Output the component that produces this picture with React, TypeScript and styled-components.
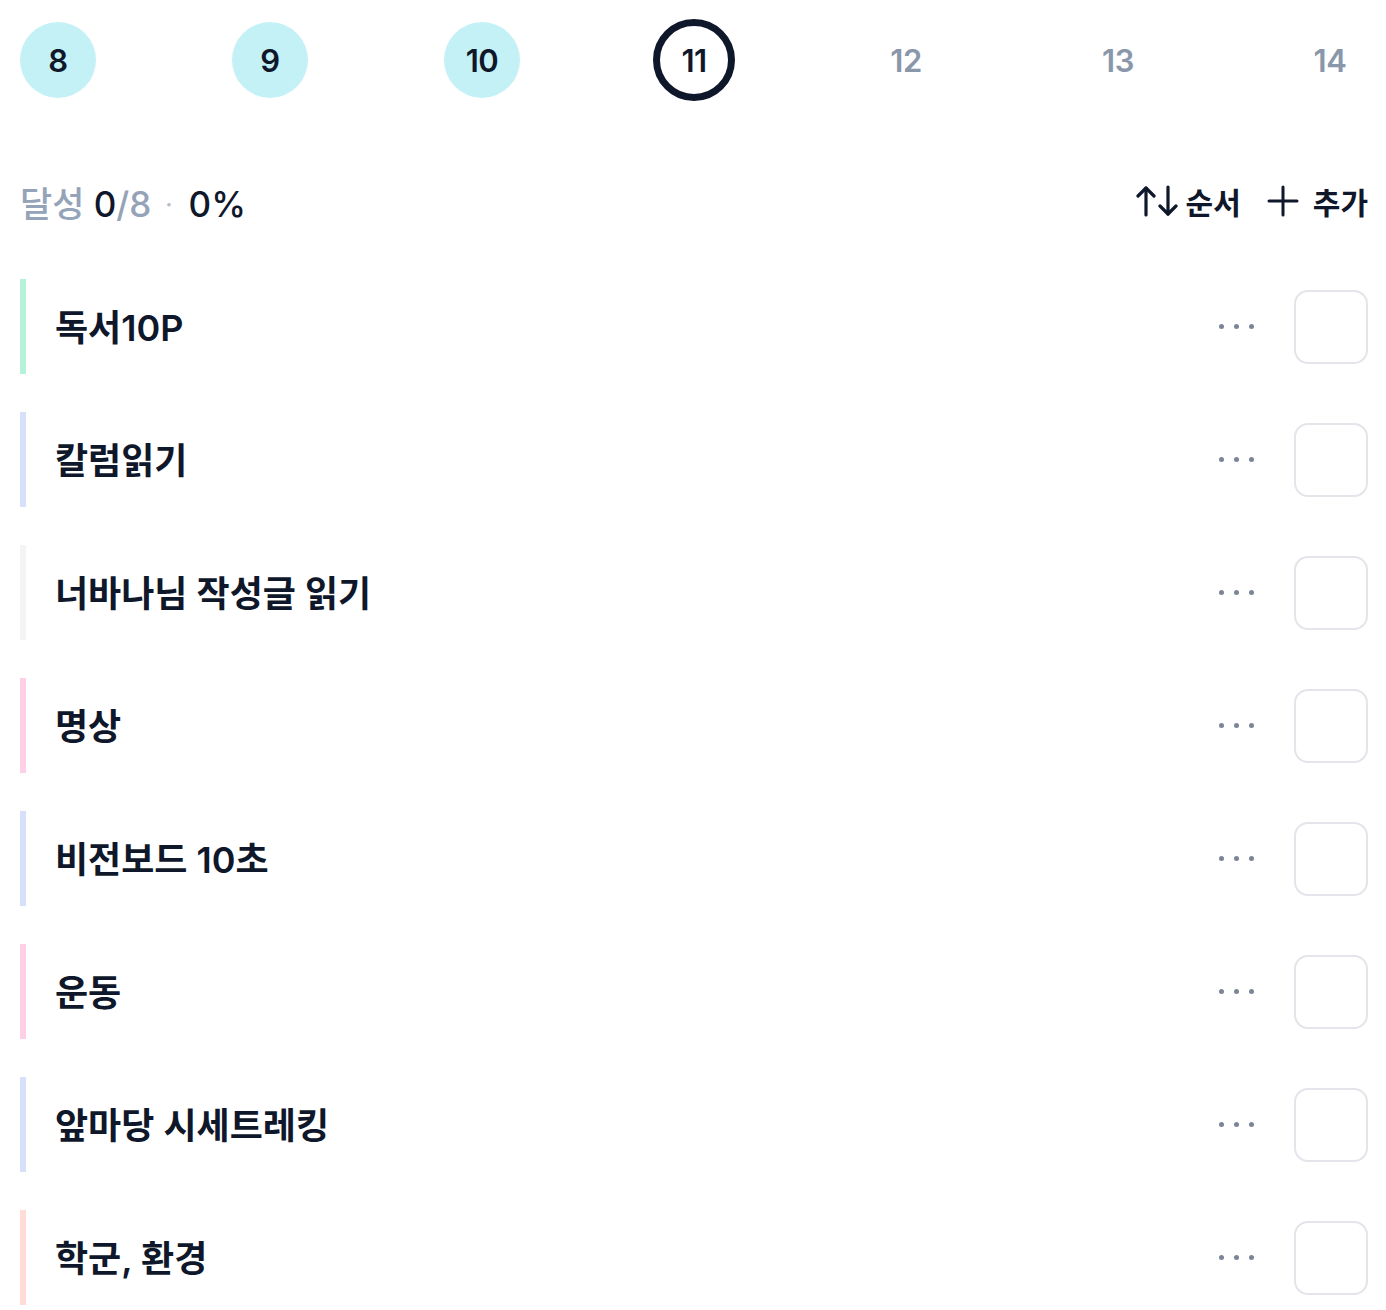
import styled, { createGlobalStyle } from "styled-components";

const GlobalStyle = createGlobalStyle`
  * { box-sizing: border-box; }
  body {
    margin: 0;
    background: #ffffff;
    font-family: Inter, "Noto Sans CJK KR", sans-serif;
    color: #0f172a;
  }
`;

const days = [
  { n: 8, state: "done" },
  { n: 9, state: "done" },
  { n: 10, state: "done" },
  { n: 11, state: "today" },
  { n: 12, state: "future" },
  { n: 13, state: "future" },
  { n: 14, state: "future" },
];

const habits = [
  { title: "독서10P", color: "#b6f1da" },
  { title: "칼럼읽기", color: "#d6e0fb" },
  { title: "너바나님 작성글 읽기", color: "#f3f4f6" },
  { title: "명상", color: "#fdd0e8" },
  { title: "비전보드 10초", color: "#d6e0fb" },
  { title: "운동", color: "#fdd0e8" },
  { title: "앞마당 시세트레킹", color: "#d6e0fb" },
  { title: "학군, 환경", color: "#ffdcd8" },
];

function SortIcon() {
  return (
    <svg width="42" height="32" viewBox="0 0 42 32" fill="none" stroke="#0f172a" strokeWidth="3.2" strokeLinecap="round" strokeLinejoin="round">
      <path d="M10 30V3" />
      <path d="M2 11l8-8 8 8" />
      <path d="M32 2v27" />
      <path d="M24 21l8 8 8-8" />
    </svg>
  );
}

function PlusIcon() {
  return (
    <svg width="32" height="32" viewBox="0 0 32 32" fill="none" stroke="#0f172a" strokeWidth="3" strokeLinecap="round">
      <path d="M16 2v28" />
      <path d="M2 16h28" />
    </svg>
  );
}

function App() {
  return (
    <>
      <GlobalStyle />
      <Page>
        <DayStrip>
          {days.map((d) => (
            <Day key={d.n} $state={d.state}>{d.n}</Day>
          ))}
        </DayStrip>

        <SummaryBar>
          <Summary>
            <Muted>달성 </Muted>0<Muted>/8</Muted>
            <Dot>·</Dot>0%
          </Summary>
          <Actions>
            <ActionButton>
              <SortIcon />
              순서
            </ActionButton>
            <ActionButton $gap={14}>
              <PlusIcon />
              추가
            </ActionButton>
          </Actions>
        </SummaryBar>

        <HabitList>
          {habits.map((h) => (
            <HabitRow key={h.title}>
              <ColorBar $color={h.color} />
              <HabitTitle>{h.title}</HabitTitle>
              <MoreDots>
                <span />
                <span />
                <span />
              </MoreDots>
              <CheckBox />
            </HabitRow>
          ))}
        </HabitList>
      </Page>
    </>
  );
}

// STYLING
const Page = styled.main`
  width: 1386px;
  padding: 20px 18px 0 20px;
`;

const DayStrip = styled.div`
  display: flex;
  justify-content: space-between;
  align-items: center;
  height: 80px;
`;

const Day = styled.div<{ $state: string }>`
  width: ${(p) => (p.$state === "today" ? "82px" : "76px")};
  height: ${(p) => (p.$state === "today" ? "82px" : "76px")};
  margin: ${(p) => (p.$state === "today" ? "-1px -3px" : "0")};
  border-radius: 50%;
  display: flex;
  align-items: center;
  justify-content: center;
  font-size: 31px;
  font-weight: 600;
  letter-spacing: -0.5px;
  background: ${(p) => (p.$state === "done" ? "#c4f1f5" : "transparent")};
  border: ${(p) => (p.$state === "today" ? "7px solid #0f172a" : "none")};
  color: ${(p) => (p.$state === "future" ? "#8a96aa" : "#0f172a")};
`;

const SummaryBar = styled.div`
  display: flex;
  justify-content: space-between;
  align-items: center;
  height: 48px;
  margin-top: 77px;
`;

const Summary = styled.div`
  font-size: 35px;
  font-weight: 500;
  color: #0f172a;
`;

const Muted = styled.span`
  color: #94a3b8;
`;

const Dot = styled.span`
  color: #b4bdca;
  font-size: 24px;
  margin: 0 16px 0 14px;
  vertical-align: 4px;
`;

const Actions = styled.div`
  display: flex;
  align-items: center;
  gap: 26px;
`;

const ActionButton = styled.div<{ $gap?: number }>`
  display: flex;
  align-items: center;
  gap: ${(p) => p.$gap ?? 8}px;
  font-size: 30px;
  font-weight: 600;
  color: #0f172a;
`;

const HabitList = styled.div`
  display: flex;
  flex-direction: column;
  gap: 38px;
  margin-top: 54px;
`;

const HabitRow = styled.div`
  display: flex;
  align-items: center;
  height: 95px;
`;

const ColorBar = styled.div<{ $color: string }>`
  width: 6px;
  align-self: stretch;
  background: ${(p) => p.$color};
`;

const HabitTitle = styled.div`
  flex: 1;
  padding-left: 29px;
  padding-bottom: 4px;
  font-size: 36px;
  font-weight: 600;
  color: #0f172a;
`;

const MoreDots = styled.div`
  display: flex;
  gap: 10px;
  margin-right: 40px;

  span {
    width: 5px;
    height: 5px;
    border-radius: 50%;
    background: #7b8597;
  }
`;

const CheckBox = styled.div`
  width: 74px;
  height: 74px;
  border: 2px solid #e3e5ea;
  border-radius: 14px;
`;

export default App;
